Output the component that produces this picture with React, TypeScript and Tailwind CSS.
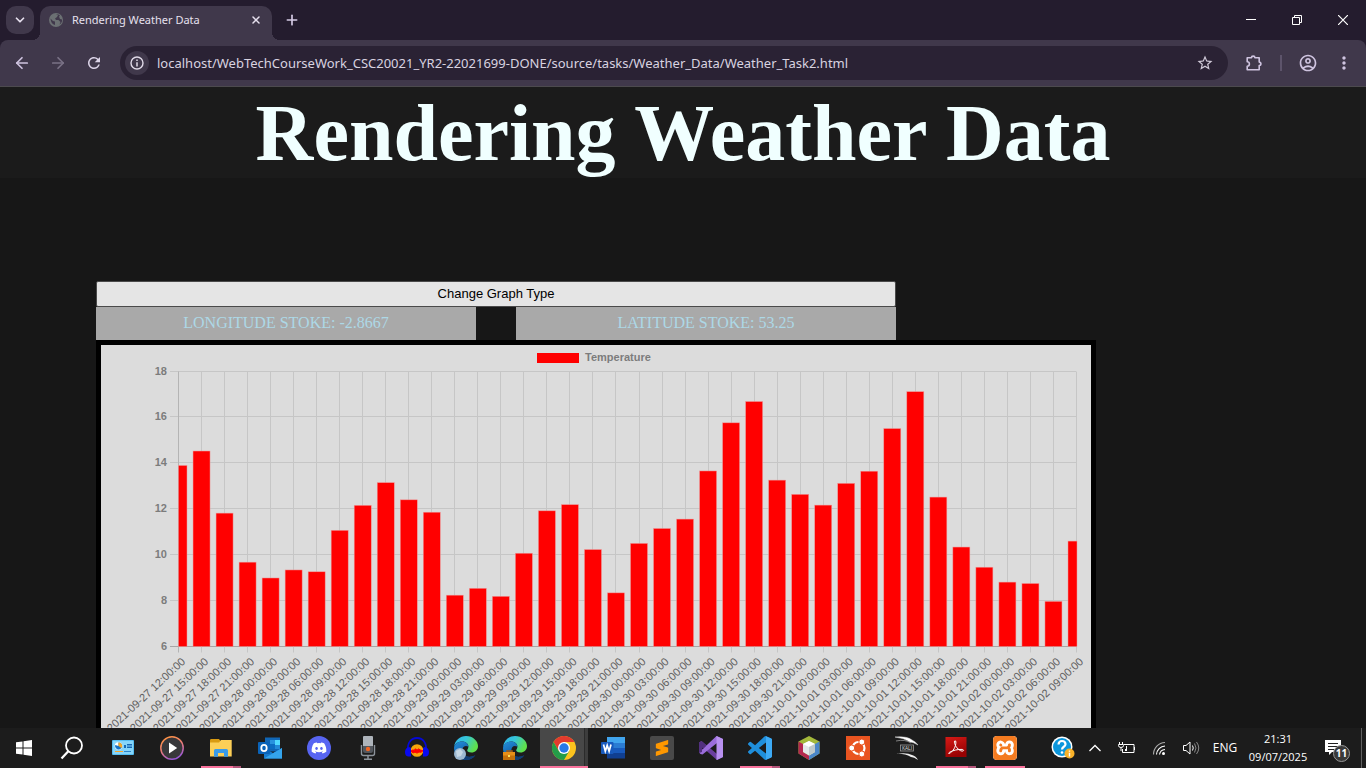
import React from "react";
import { ArrowLeft, ArrowRight, ChevronDown, Plus, X } from "lucide-react";
import { MdRefresh, MdStarBorder, MdMoreVert, MdOutlineAccountCircle } from "react-icons/md";
import { FaDiscord } from "react-icons/fa";
import { SiSublimetext, SiXampp } from "react-icons/si";

const temperatures = [
  13.9, 14.53, 11.82, 9.68, 8.99, 9.34, 9.26, 11.07, 12.16, 13.15,
  12.4, 11.86, 8.24, 8.54, 8.19, 10.07, 11.92, 12.19, 10.23, 8.34,
  10.5, 11.15, 11.56, 13.66, 15.76, 16.69, 13.26, 12.64, 12.17, 13.12,
  13.65, 15.51, 17.12, 12.52, 10.34, 9.46, 8.81, 8.75, 7.97, 10.6,
];

const firstReading = Date.UTC(2021, 8, 27, 12);
const labels = temperatures.map((_, i) =>
  new Date(firstReading + i * 3 * 3600 * 1000).toISOString().slice(0, 19).replace("T", " ")
);

const plot = { left: 77, right: 975, top: 26.5, bottom: 301.5 };
const step = (plot.right - plot.left) / (temperatures.length - 1);
const xAt = (i: number) => plot.left + i * step;
const yAt = (v: number) => plot.bottom - ((v - 6) / 12) * (plot.bottom - plot.top);

function TemperatureChart() {
  return (
    <svg
      viewBox="0 0 990 495"
      className="block w-full font-['Liberation_Sans',Arial,sans-serif]"
      role="img"
      aria-label="Temperature"
    >
      <rect x="436" y="8" width="42" height="10" fill="#ff0000" />
      <text x="484" y="16" className="text-[11px] font-bold" fill="#7c7c7c">Temperature</text>
      {[6, 8, 10, 12, 14, 16, 18].map((v) => (
        <g key={v}>
          <line x1="69" x2={plot.right} y1={Math.round(yAt(v)) - 0.5} y2={Math.round(yAt(v)) - 0.5} stroke={v === 6 ? "#a6a6a6" : "#c6c6c6"} />
          <text x="66" y={yAt(v) + 3} textAnchor="end" className="text-[11px] font-bold" fill="#7c7c7c">{v}</text>
        </g>
      ))}
      {labels.map((label, i) => (
        <line key={label} x1={Math.round(xAt(i)) + 0.5} x2={Math.round(xAt(i)) + 0.5} y1={plot.top} y2={plot.bottom + 6} stroke={i === 0 ? "#b4b4b4" : "#c6c6c6"} />
      ))}
      {temperatures.map((t, i) => {
        const left = Math.max(xAt(i) - 8, plot.left + 0.5);
        const right = Math.min(xAt(i) + 9, plot.right + 1);
        return <rect key={i} x={left} y={yAt(t)} width={right - left} height={plot.bottom - yAt(t)} fill="#ff0000" stroke="#e99" strokeWidth="0.5" />;
      })}
      {labels.map((label, i) => (
        <text
          key={label}
          transform={`translate(${xAt(i) + 8} ${plot.bottom + 16}) rotate(-43)`}
          textAnchor="end"
          className="text-[11px]"
          fill="#606060"
        >
          {label}
        </text>
      ))}
    </svg>
  );
}

function Icon({ children, size = 24 }: { children: React.ReactNode; size?: number }) {
  return (
    <svg viewBox={`0 0 ${size} ${size}`} width={size} height={size} aria-hidden="true" className="shrink-0">
      {children}
    </svg>
  );
}

const EdgeBase = () => (
  <>
    <defs>
      <linearGradient id="edgeTop" x1="0" y1="0" x2="1" y2="0.4">
        <stop offset="0" stopColor="#2fb4ee" />
        <stop offset="0.5" stopColor="#36c6d8" />
        <stop offset="1" stopColor="#5fe04c" />
      </linearGradient>
      <linearGradient id="edgeLow" x1="0" y1="0" x2="0.6" y2="1">
        <stop offset="0" stopColor="#2391dc" />
        <stop offset="1" stopColor="#0c4a94" />
      </linearGradient>
    </defs>
    <path d="M0 11C1 4 6 0 12 0c7 0 12 5 12 10 0 4-3 6.500-6.500 6.500-3 0-4.500-1.200-4.300-2.400.3-1 1.200-1.600 1.200-3.600C14.400 7.500 11 5.600 8 5.600 4 5.600 1 8 0 11z" fill="url(#edgeTop)" />
    <path d="M0 12C.3 8 4 5.500 8 5.500c3.200 0 6.300 2 6.300 5C10 8.500 7.800 12 8.500 15.500 9.500 20 14 22.800 21 19.500 19 22.400 16 24 12 24 5 24 0 19 0 12z" fill="url(#edgeLow)" />
    <path d="M8.500 15c.5 4.500 5.500 7.500 13 4.300C19 22.500 16 24 12 24c-4-1.500-5.500-5-3.500-9z" fill="#123d73" />
  </>
);

const icons = {
  widgets: (
    <Icon>
      <rect x="1" y="4" width="22" height="15" rx="1" fill="#55bdf2" />
      <rect x="2" y="5" width="20" height="13" fill="#86d5fa" />
      <circle cx="7.500" cy="10" r="3.800" fill="#fff" />
      <path d="M7.500 10V6.500A3.500 3.500 0 1 1 4.200 9z" fill="#1673c8" />
      <path d="M7.500 10V6.500A3.500 3.500 0 0 1 10.600 12z" fill="#f5a623" />
      <path d="M13 12V9h2v3zM16 8h5v1.500h-5zM16 10.500h5V12h-5z" fill="#1769b5" />
      <path d="M4 15.500h8" stroke="#f3a42c" />
      <path d="M13 15.500h7" stroke="#2c83c8" />
    </Icon>
  ),
  player: (
    <Icon>
      <defs>
        <linearGradient id="ring" x1="0.2" y1="0" x2="0.6" y2="1">
          <stop offset="0" stopColor="#ff9440" />
          <stop offset="0.5" stopColor="#e87b78" />
          <stop offset="1" stopColor="#9656d8" />
        </linearGradient>
      </defs>
      <circle cx="12" cy="12" r="11.200" fill="#38383b" stroke="url(#ring)" strokeWidth="1.500" />
      <path d="M9 6.500 17.200 12 9 17.500z" fill="#fff" />
    </Icon>
  ),
  explorer: (
    <Icon>
      <path d="M1 4.200Q1 3 2.200 3H10l1.500 2H22v3H1z" fill="#d99b12" />
      <path d="M1 6.500h9L12 4h10.700v16.500H1z" fill="#fccf57" />
      <path d="M5 20.700V14.500Q5 13 6.500 13h11Q19 13 19 14.500v6.200h-4V17H9v3.700z" fill="#3a9be8" />
    </Icon>
  ),
  outlook: (
    <Icon>
      <rect x="7" y="1.500" width="15" height="14" fill="#1066b5" />
      <path d="M12 4h5v4h-5z" fill="#2893df" />
      <path d="M17 4h5v5h-5z" fill="#50d9ff" />
      <path d="M12 8h5v5h-5z" fill="#0d6dc2" />
      <path d="M17 9h5v4h-5z" fill="#238ad8" />
      <path d="M6 12l9 5 9-5v10.500H6z" fill="#167cd0" />
      <path d="M6 22.500 24 12v10.500z" fill="#34a4ec" />
      <rect x="0" y="6" width="12" height="12" rx="1" fill="#0a63b8" />
      <ellipse cx="6" cy="12" rx="2.700" ry="3.200" fill="none" stroke="#fff" strokeWidth="1.800" />
    </Icon>
  ),
  discord: (
    <span className="flex size-6 items-center justify-center rounded-full bg-[#5865f2] text-white">
      <FaDiscord size={16} />
    </span>
  ),
  mic: (
    <Icon>
      <path d="M7 1Q7 0 8 0h8q1 0 1 1v9H7z" fill="#aeb4bb" />
      <path d="M7 10h10v5q0 2-2 2H9q-2 0-2-2z" fill="#52575e" />
      <path d="M5.500 9v8.500q0 2 2 2h9q2 0 2-2V9" fill="none" stroke="#8c939b" strokeWidth="1.400" />
      <circle cx="12" cy="13" r="2.200" fill="#f26522" />
      <path d="M12 19.500V23M8 23.200h8" stroke="#8c939b" strokeWidth="1.500" />
    </Icon>
  ),
  audacity: (
    <Icon>
      <circle cx="12" cy="14.500" r="6.300" fill="#f7a60b" />
      <path d="M6 15l2-1.200 1 .7 1.500-1.800 1.500 1.500 1.500-1.300 2 1.100 2.500.8-2 1.500-2-.3-2 1.100-2-1-2 .9z" fill="#f00" stroke="#f00" />
      <path d="M3 15C2 7 6 2 12 2s10 5 9 13" fill="none" stroke="#0508d8" strokeWidth="1.800" />
      <path d="M6 12v8.500H3Q0 20 0 16t4-5zM18 12v8.500h3q3-.5 3-4.500t-4-5z" fill="#0909f0" />
    </Icon>
  ),
  edge: (
    <Icon>
      <EdgeBase />
      <circle cx="6" cy="18" r="6" fill="#9db9d2" />
      <path d="M2 15l4-2 3 3-2 4-4 1z" fill="#c5d7e5" />
    </Icon>
  ),
  edgeWork: (
    <Icon>
      <EdgeBase />
      <path d="M4 16v-1h5v1" fill="none" stroke="#a55b12" strokeWidth="1.500" />
      <rect x="0" y="16" width="12" height="8" fill="#c4700a" />
      <rect x="0" y="16" width="12" height="3.500" fill="#e78f18" />
      <rect x="5" y="19" width="2" height="2" fill="#ffe25c" />
    </Icon>
  ),
  chrome: (
    <Icon>
      <circle cx="12" cy="12" r="12" fill="#fcc31e" />
      <path d="M12 6h10.400A12 12 0 0 0 1.600 6l5.200 9z" fill="#e33b2e" />
      <path d="M1.600 6A12 12 0 0 0 12 24l5.200-9L12 12 6.800 15z" fill="#249c49" />
      <circle cx="12" cy="12" r="6" fill="#fff" />
      <circle cx="12" cy="12" r="4.700" fill="#2879e8" />
    </Icon>
  ),
  word: (
    <Icon>
      <path d="M6 1h18v6H6z" fill="#41a5ee" />
      <path d="M6 7h18v5H6z" fill="#2b7cd3" />
      <path d="M6 12h18v5H6z" fill="#185abd" />
      <path d="M6 17h18v5.500H6z" fill="#103f91" />
      <rect x="0" y="6" width="12.500" height="12" rx="1" fill="#185abd" />
      <path d="M2.500 8.500 4.300 15.300 6.200 9.300 8.100 15.300 10 8.500" fill="none" stroke="#fff" strokeWidth="1.700" />
    </Icon>
  ),
  sublime: (
    <span className="flex size-6 items-center justify-center rounded-xs bg-[#494949] text-[#ff9800]">
      <SiSublimetext size={16} />
    </span>
  ),
  visualStudio: (
    <Icon>
      <path d="M0 6.500 2.500 5 18 18v6L3 11v6.500L0 16z" fill="#6b3fa0" />
      <path d="M0 16.500 17.500 0 24 3v18l-6 3V7L3.500 18.500 1.500 18z" fill="#9b6ddb" />
      <path d="M17.500 0 24 3v18l-6.500 3z" fill="#b891f0" />
      <path d="M0 6.500 2.500 5l5 4.500L4 13 3 11v5L0 17z" fill="#52307f" />
    </Icon>
  ),
  vscode: (
    <Icon>
      <path
        fill="#1f8fdc"
        d="M23.150 2.587L18.210.21a1.494 1.494 0 0 0-1.705.29l-9.460 8.630-4.120-3.128a.999.999 0 0 0-1.276.057L.327 7.261A1 1 0 0 0 .326 8.740L3.899 12 .326 15.260a1 1 0 0 0 .001 1.479L1.650 17.940a.999.999 0 0 0 1.276.057l4.120-3.128 9.460 8.630a1.492 1.492 0 0 0 1.704.29l4.942-2.377A1.500 1.500 0 0 0 24 20.060V3.939a1.500 1.500 0 0 0-.85-1.352zm-5.146 14.861L10.826 12l7.178-5.448v10.896z"
      />
      <path d="M18 .2 23.200 2.600Q24 3 24 4v16q0 1-.8 1.400L18 23.800z" fill="#3daaf5" />
    </Icon>
  ),
  netbeans: (
    <Icon>
      <path d="M12 0 22.500 5.500v12L12 24 1.500 17.500v-12z" fill="#a3b83a" />
      <path d="M1.500 5.500 6 8v8l6 3.500V24L1.500 17.500z" fill="#b4284f" />
      <path d="M22.500 5.500 18 8v8l-6 3.500V24l10.500-6.500z" fill="#4a86c8" />
      <path d="M12 5l6 3v8l-6 3.500L6 16V8z" fill="#e3e8e9" />
      <path d="M12 5l6 3-6 3-6-3z" fill="#fff" />
      <path d="M12 11l6-3v8l-6 3.500z" fill="#bfc9ca" />
    </Icon>
  ),
  ubuntu: (
    <Icon>
      <rect width="24" height="24" fill="#e95420" />
      <circle cx="12.500" cy="12" r="6" fill="none" stroke="#fff" strokeWidth="2.200" />
      <g fill="#fff" stroke="#e95420" strokeWidth="1">
        <circle cx="5.700" cy="12" r="3" />
        <circle cx="15.800" cy="6" r="3" />
        <circle cx="15.800" cy="18" r="3" />
      </g>
    </Icon>
  ),
  kali: (
    <Icon>
      <path d="M0 1q12-1 17 3 4 2 6 5-5-3-8-3Q9 2 0 1z" fill="#fff" stroke="#ddd" strokeWidth="0.500" />
      <path d="M1 5q9-2 15 2" fill="none" stroke="#aaa" strokeWidth="0.700" />
      <path d="M0 18q12-2 17 1 4 1 6 5-4-3-7-3-7-4-16-3z" fill="#eee" />
      <rect x="5.500" y="9" width="13" height="6" fill="#222" stroke="#999" strokeWidth="0.800" />
      <text x="12" y="14" textAnchor="middle" fontSize="5" fill="#ddd">KALI</text>
    </Icon>
  ),
  acrobat: (
    <Icon>
      <defs>
        <linearGradient id="acro" x1="0" y1="0" x2="0.4" y2="1">
          <stop offset="0" stopColor="#d61a16" />
          <stop offset="1" stopColor="#980203" />
        </linearGradient>
      </defs>
      <rect x="1.500" y="1" width="21" height="20" fill="url(#acro)" />
      <path d="M5 17.500c4-1.500 7-7 6.900-11.500 0-1.800-1.800-1.700-1.500.2.700 4 4 8.300 7.600 8.900 2.200.2 2-1.600 0-1.700-4.200-.1-8.500.8-12 2.600-1.500.9-1.700 1.600-1 1.500z" fill="none" stroke="#fff" strokeWidth="1" />
    </Icon>
  ),
  xampp: (
    <span className="flex size-6 items-center justify-center overflow-hidden rounded-[4px] bg-white text-[#f47b20]">
      <SiXampp size={24} />
    </span>
  ),
};

type AppItem = { name: string; icon: React.ReactNode; state?: "grouped" | "running" | "active" };

const apps: AppItem[] = [
  { name: "Control Panel", icon: icons.widgets },
  { name: "Media Player", icon: icons.player },
  { name: "File Explorer", icon: icons.explorer, state: "grouped" },
  { name: "Outlook", icon: icons.outlook },
  { name: "Discord", icon: icons.discord },
  { name: "Voice Recorder", icon: icons.mic },
  { name: "Audacity", icon: icons.audacity },
  { name: "Edge", icon: icons.edge },
  { name: "Edge Work", icon: icons.edgeWork },
  { name: "Chrome", icon: icons.chrome, state: "active" },
  { name: "Word", icon: icons.word },
  { name: "Sublime Text", icon: icons.sublime },
  { name: "Visual Studio", icon: icons.visualStudio },
  { name: "Visual Studio Code", icon: icons.vscode, state: "grouped" },
  { name: "NetBeans", icon: icons.netbeans },
  { name: "Ubuntu", icon: icons.ubuntu },
  { name: "Kali Linux", icon: icons.kali },
  { name: "Acrobat Reader", icon: icons.acrobat, state: "grouped" },
  { name: "XAMPP", icon: icons.xampp, state: "running" },
];

function TaskbarApp({ name, icon, state }: AppItem) {
  return (
    <button
      aria-label={name}
      className={`relative flex h-10 w-12 shrink-0 items-center justify-center ${state === "active" ? "bg-[#484848]" : ""}`}
    >
      {icon}
      {state === "active" && (
        <>
          <span className="absolute inset-y-0 right-0 w-1 border-l border-[#2b2b2b] bg-[#3d3d3d]" />
          <span className="absolute inset-x-0 bottom-0 h-0.5 bg-[#f9729c]" />
        </>
      )}
      {state === "grouped" && (
        <span className="absolute inset-x-1 bottom-0 h-0.5 border-r-8 border-[#b3557a] bg-[#f9729c]" />
      )}
      {state === "running" && <span className="absolute inset-x-1 bottom-0 h-0.5 bg-[#f9729c]" />}
    </button>
  );
}

function Taskbar() {
  return (
    <footer className="flex h-10 shrink-0 items-center bg-[#1c1c1c] font-['Open_Sans','Noto_Sans',sans-serif] text-white">
      <button aria-label="Start" className="flex h-10 w-12 shrink-0 items-center justify-center">
        <Icon size={16}>
          <path d="M0 2.300 6.500 1.400V7.500H0zM7.500 1.200 16 0v7.500H7.500zM0 8.500h6.500v6.100L0 13.700zM7.500 8.500H16V16l-8.500-1.200z" fill="#fff" />
        </Icon>
      </button>
      <button aria-label="Search" className="mr-[3px] flex h-10 w-12 shrink-0 items-center justify-center">
        <Icon>
          <circle cx="14" cy="9.500" r="8" fill="none" stroke="#fff" strokeWidth="1.800" />
          <path d="M8.300 15.200 1.500 22.500" stroke="#fff" strokeWidth="2.200" />
        </Icon>
      </button>
      <nav aria-label="Applications" className="flex gap-px">
        {apps.map((app) => (
          <TaskbarApp key={app.name} {...app} />
        ))}
      </nav>
      <div className="ml-auto flex h-10 items-center">
        <button aria-label="Help" className="flex w-8 justify-center">
          <Icon>
            <circle cx="11" cy="11" r="10.500" fill="#fff" />
            <circle cx="11" cy="11" r="9" fill="#0c96dc" />
            <path d="M7.500 8.500Q7.800 5 11 5t3.500 3.200C14.500 11 11 10.500 11 13.500" fill="none" stroke="#fff" strokeWidth="2.200" />
            <circle cx="11" cy="16.500" r="1.300" fill="#fff" />
            <circle cx="18.500" cy="17.500" r="5" fill="#f9b128" />
            <path d="M18.500 14.500v1.300M18.500 16.700v3.800" stroke="#fff" strokeWidth="1.400" />
          </Icon>
        </button>
        <button aria-label="Show hidden icons" className="flex w-8 justify-center">
          <Icon size={16}><path d="M2.500 11 8 5.500 13.500 11" fill="none" stroke="#fff" strokeWidth="1.300" /></Icon>
        </button>
        <button aria-label="Battery" className="flex w-8 justify-center">
          <Icon size={18}>
            <path d="M6 5.500h10v8H4.500V10M16.500 8v3" fill="none" stroke="#fff" />
            <path d="M8 7h1v5H7v-2h1z" fill="#fff" />
            <path d="M1.500 3v3M4.500 3v3M.5 5.500h5v1q0 2-2.500 2T.5 6.500zM3 8.500V12" fill="none" stroke="#fff" />
          </Icon>
        </button>
        <button aria-label="Wi-Fi" className="flex w-8 justify-center">
          <Icon size={16}>
            <g fill="none" stroke="#aaa" strokeWidth="1.100">
              <path d="M2.500 14.500A12 12 0 0 1 14 2.500" />
              <path d="M5.500 14.500A9 9 0 0 1 14 6" stroke="#fff" />
              <path d="M8.500 14.500A6 6 0 0 1 14 9.500" stroke="#fff" />
            </g>
            <circle cx="12.500" cy="13.500" r="1.500" fill="#fff" />
          </Icon>
        </button>
        <button aria-label="Volume" className="flex w-8 justify-center">
          <Icon size={18}>
            <path d="M1.500 6.500H4l4-3.500v12l-4-3.500H1.500z" fill="none" stroke="#fff" />
            <path d="M10.500 6.500q1.500 2.500 0 5" fill="none" stroke="#fff" />
            <path d="M12.500 4.500q3 4.500 0 9M14.500 3q4.500 6 0 12" fill="none" stroke="#888" />
          </Icon>
        </button>
        <span className="w-9 text-center text-xs">ENG</span>
        <div className="w-[70px] text-center text-[11px] leading-[18px]">
          <div>21:31</div>
          <div>09/07/2025</div>
        </div>
        <button aria-label="11 notifications" className="relative mr-2 flex w-10 justify-center">
          <Icon size={18}>
            <path d="M1 1h16v12H8l-3 3v-3H1z" fill="#fff" />
            <path d="M4 4.500h10M4 7.500h10M4 10.500h6" stroke="#222" />
          </Icon>
          <span className="absolute left-5 top-1.5 flex size-[17px] items-center justify-center rounded-full border border-[#999] bg-[#3a3a3a] text-[10px] font-bold">
            11
          </span>
        </button>
        <span className="mr-1 h-10 w-px bg-[#606060]" />
      </div>
    </footer>
  );
}

function TabStrip() {
  return (
    <div className="flex h-10 items-end bg-[#241c2e] text-[#e6e0ee]">
      <button aria-label="Search tabs" className="mb-1.5 ml-1.5 flex size-7 items-center justify-center rounded-[10px] bg-[#40384b]">
        <ChevronDown size={14} strokeWidth={3} />
      </button>
      <div className="relative ml-1.5 flex h-[34px] w-[232px] items-center rounded-t-[10px] bg-[#40384b] pb-1.5 pl-2 pr-2.5">
        <span className="absolute -left-2 bottom-0 size-2 bg-[radial-gradient(circle_at_0_0,#241c2e_8px,#40384b_8px)]" />
        <span className="absolute -right-2 bottom-0 size-2 bg-[radial-gradient(circle_at_100%_0,#241c2e_8px,#40384b_8px)]" />
        <Icon size={16}>
          <circle cx="8" cy="8" r="7" fill="#6b7073" />
          <path d="M2.500 6.500 5 9l2 .5v3.500q-4-1-4.500-6.500zM8 2l2 1-1 2-2 1.500L8 8h2.500l2 2-1 2.500q3-2 2.500-5L12 7l-1-2.500 1-1Q10.500 1.800 8 2z" fill="#40384b" />
        </Icon>
        <span className="ml-2 pt-px font-['Noto_Sans','Open_Sans',sans-serif] text-[11px]">Rendering Weather Data</span>
        <button aria-label="Close tab" className="ml-auto"><X size={12} strokeWidth={3} /></button>
      </div>
      <button aria-label="New tab" className="ml-3 mb-3 text-[#d5cbe6]"><Plus size={16} strokeWidth={2.5} /></button>
      <div className="ml-auto flex h-10 text-white">
        <button aria-label="Minimize" className="flex w-[46px] items-center justify-center">
          <Icon size={10}><path d="M0 4.500h10" stroke="#fff" /></Icon>
        </button>
        <button aria-label="Restore" className="flex w-[46px] items-center justify-center">
          <Icon size={10}><path d="M.5 2.500h7v7h-7zM2.500 2.500v-2h7v7h-2" fill="none" stroke="#fff" /></Icon>
        </button>
        <button aria-label="Close" className="flex w-[46px] items-center justify-center">
          <Icon size={10}><path d="M0 0 10 10M10 0 0 10" stroke="#fff" strokeWidth="1.200" /></Icon>
        </button>
      </div>
    </div>
  );
}

function Toolbar() {
  return (
    <div className="bg-[#241c2e]">
      <div className="flex h-[47px] items-center rounded-t-lg border-b border-[#4c4a4e] bg-[#40384b] px-1 text-[#cfc4e0]">
        <button aria-label="Back" className="flex w-9 justify-center"><ArrowLeft size={18} strokeWidth={2.25} /></button>
        <button aria-label="Forward" className="flex w-9 justify-center text-[#7a7286]"><ArrowRight size={18} strokeWidth={2.25} /></button>
        <button aria-label="Reload" className="flex w-9 justify-center text-[#dcd4e8]"><MdRefresh size={18} /></button>
        <div className="mx-2 flex h-[34px] flex-1 items-center rounded-full bg-[#2a2234] pl-[5px] pr-3.5 text-[#d0cad8]">
          <button aria-label="View site information" className="flex size-6 items-center justify-center rounded-full bg-[#40384b]">
            <Icon size={14}>
              <circle cx="7" cy="7" r="6" fill="none" stroke="#e0dae8" strokeWidth="1.400" />
              <path d="M7 3.500v1.500M7 6.200V10.500" stroke="#e0dae8" strokeWidth="1.500" />
            </Icon>
          </button>
          <input
            aria-label="Address"
            readOnly
            className="ml-2 min-w-0 flex-1 bg-transparent pt-0.5 font-['Noto_Sans','Open_Sans',sans-serif] text-[13px] text-[#d9d3e0] outline-none"
            value="localhost/WebTechCourseWork_CSC20021_YR2-22021699-DONE/source/tasks/Weather_Data/Weather_Task2.html"
          />
          <button aria-label="Bookmark this tab"><MdStarBorder size={18} /></button>
        </div>
        <button aria-label="Extensions" className="flex w-9 justify-center">
          <Icon size={18}>
            <path
              d="M2.200 3.800h4.300a1.700 1.700 0 0 1 3.400 0h4.300v4.300a1.700 1.700 0 0 1 0 3.400v4.300h-12v-3.600a2.200 2.200 0 0 0 0-4.400z"
              fill="none"
              stroke="currentColor"
              strokeWidth="1.600"
              strokeLinejoin="round"
            />
          </Icon>
        </button>
        <span className="mx-2 h-4 w-0.5 bg-[#5d546b]" />
        <button aria-label="Profile" className="flex w-9 justify-center"><MdOutlineAccountCircle size={20} /></button>
        <button aria-label="Menu" className="flex w-9 justify-center"><MdMoreVert size={20} /></button>
      </div>
    </div>
  );
}

export default function App() {
  return (
    <div className="flex h-screen flex-col overflow-hidden bg-[#171717]">
      <TabStrip />
      <Toolbar />
      <main className="min-h-0 flex-1 overflow-hidden font-['Liberation_Serif',serif]">
        <h1 className="bg-[#1b1b1b] pt-0.5 text-center text-[80px] font-bold leading-[89px] text-[#f0ffff]">Rendering Weather Data</h1>
        <div className="ml-24 mt-[103px] max-w-[1000px]">
          <div className="max-w-[800px]">
            <button className="block h-[26px] w-full rounded-xs border border-[#4a4a4a] bg-[#e5e5e5] font-['Liberation_Sans',Arial,sans-serif] text-[13px] leading-6 text-black">
              Change Graph Type
            </button>
            <div className="grid grid-cols-2 gap-10 text-center text-base leading-8 text-[#add8e6]">
              <p className="bg-[#a9a9a9] pb-px">LONGITUDE STOKE: -2.8667</p>
              <p className="bg-[#a9a9a9] pb-px">LATITUDE STOKE: 53.25</p>
            </div>
          </div>
          <div className="border-[5px] border-black bg-[#dcdcdc]">
            <TemperatureChart />
          </div>
        </div>
      </main>
      <Taskbar />
    </div>
  );
}
